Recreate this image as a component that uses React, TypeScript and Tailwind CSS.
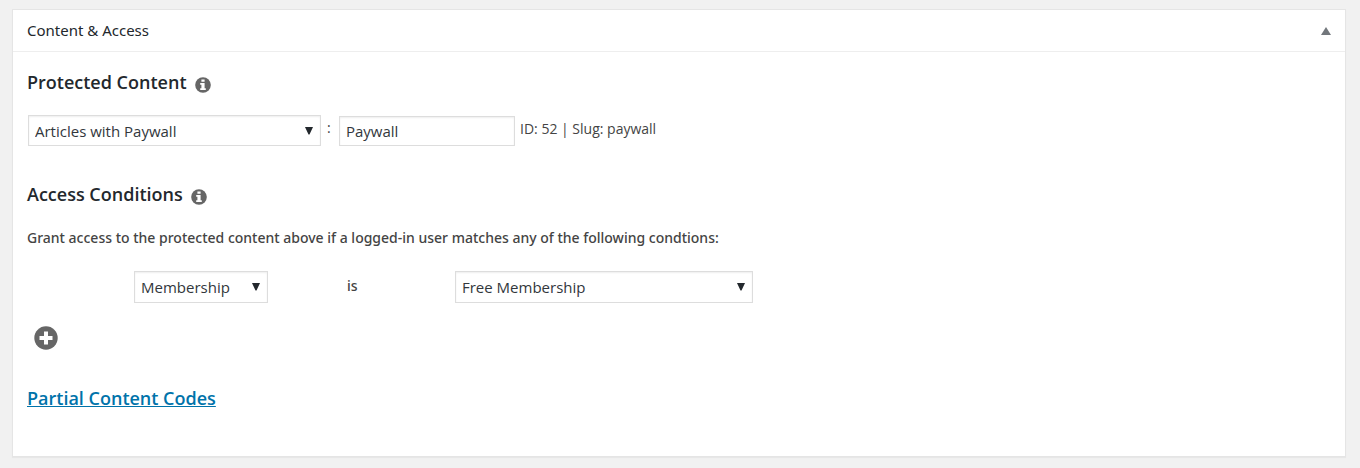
import { useState } from "react";
import type { ReactNode } from "react";

interface SelectBoxProps {
  label: string;
  options: string[];
  className: string;
}

function SelectBox({ label, options, className }: SelectBoxProps) {
  const [value, setValue] = useState(options[0]);

  return (
    <div className={`relative ${className}`}>
      <select
        aria-label={label}
        value={value}
        onChange={(e) => setValue(e.target.value)}
        className="block h-full w-full appearance-none border border-[#ddd] bg-white pl-1.5 pr-5 pt-0.5 text-[15px] text-[#32373c] shadow-[inset_0_1px_2px_rgba(0,0,0,0.07)]"
      >
        {options.map((option) => (
          <option key={option}>{option}</option>
        ))}
      </select>
      <svg
        viewBox="0 0 8 8"
        className="pointer-events-none absolute right-2 top-3 size-2 fill-[#23282d]"
      >
        <path d="M0 0h8L4.5 7.5h-1z" />
      </svg>
    </div>
  );
}

function InfoIcon() {
  return (
    <svg viewBox="0 0 16 16" className="mt-1.5 size-4">
      <circle cx="8" cy="8" r="7.8" fill="#666" />
      <path
        d="M6.4 2.4h3.2v2.4H6.4zM5.2 6h4.4v5.2h1.2V13H5.2v-1.8h1.2V7.8H5.2z"
        fill="#fff"
      />
    </svg>
  );
}

function SectionTitle({ children, help }: { children: ReactNode; help: string }) {
  return (
    <div className="flex h-6 items-center gap-2">
      <h3 className="text-lg font-semibold leading-6 text-[#23282d]">{children}</h3>
      <button type="button" aria-label={help}>
        <InfoIcon />
      </button>
    </div>
  );
}

export default function App() {
  const [open, setOpen] = useState(true);
  const [content, setContent] = useState("Paywall");

  return (
    <div className="min-h-screen bg-[#f1f1f1] px-3 pb-2.5 pt-[9px] font-['Open_Sans','Noto_Sans',sans-serif] text-sm text-[#444]">
      <section className="mr-0.5 border border-[#e5e5e5] bg-white shadow-[0_1px_1px_rgba(0,0,0,0.04)]">
        {/* Panel header */}
        <div className="flex h-[42px] items-center justify-between border-b border-[#eee] px-3.5">
          <h2 className="font-['Noto_Sans',sans-serif] text-[15px] text-[#23282d]">
            Content &amp; Access
          </h2>
          <button
            type="button"
            aria-label="Toggle panel"
            aria-expanded={open}
            onClick={() => setOpen(!open)}
          >
            <svg viewBox="0 0 10 8" className="h-2 w-2.5 fill-[#72777c]">
              <path d="M5 0l5 8H0z" />
            </svg>
          </button>
        </div>

        {open && (
          <div className="px-3.5 pb-[46px] pt-[18px]">
            {/* Protected content */}
            <SectionTitle help="About protected content">Protected Content</SectionTitle>
            <div className="ml-px mt-5 flex h-8 items-end">
              <SelectBox
                label="Content type"
                options={["Articles with Paywall", "All Posts", "All Pages"]}
                className="h-[31px] w-[293px]"
              />
              <span className="w-[18px] pb-2 pl-1.5">:</span>
              <input
                type="text"
                aria-label="Content name"
                value={content}
                onChange={(e) => setContent(e.target.value)}
                className="h-[30px] w-44 border border-[#ddd] px-1.5 text-[15px] text-[#32373c] shadow-[inset_0_1px_2px_rgba(0,0,0,0.07)]"
              />
              <span className="pb-[7px] pl-[5px]">ID: 52 | Slug: paywall</span>
            </div>

            {/* Access conditions */}
            <div className="mt-9">
              <SectionTitle help="About access conditions">Access Conditions</SectionTitle>
            </div>
            <p className="mt-[22px] font-['Noto_Sans',sans-serif] font-medium leading-5">
              Grant access to the protected content above if a logged-in user matches any of the
              following condtions:
            </p>
            <div className="mt-[23px] flex h-8 items-center pl-[107px]">
              <SelectBox
                label="Condition"
                options={["Membership", "User Role"]}
                className="h-8 w-[134px]"
              />
              <span className="w-[187px] pb-0.5 pl-[79px] font-['Noto_Sans',sans-serif] font-medium">is</span>
              <SelectBox
                label="Membership level"
                options={["Free Membership", "Paid Membership"]}
                className="h-8 w-[298px]"
              />
            </div>
            <button type="button" aria-label="Add condition" className="ml-[7px] mt-[23px] block">
              <svg viewBox="0 0 24 24" className="size-6">
                <circle cx="12" cy="12" r="11.7" fill="#666" />
                <path d="M10 5.5h4V10h4.5v4H14v4.5h-4V14H5.5v-4H10z" fill="#fff" />
              </svg>
            </button>

            <a
              href="#partial-content-codes"
              className="mt-9 inline-block text-lg font-semibold leading-6 text-[#0073aa] underline"
            >
              Partial Content Codes
            </a>
          </div>
        )}
      </section>
    </div>
  );
}
